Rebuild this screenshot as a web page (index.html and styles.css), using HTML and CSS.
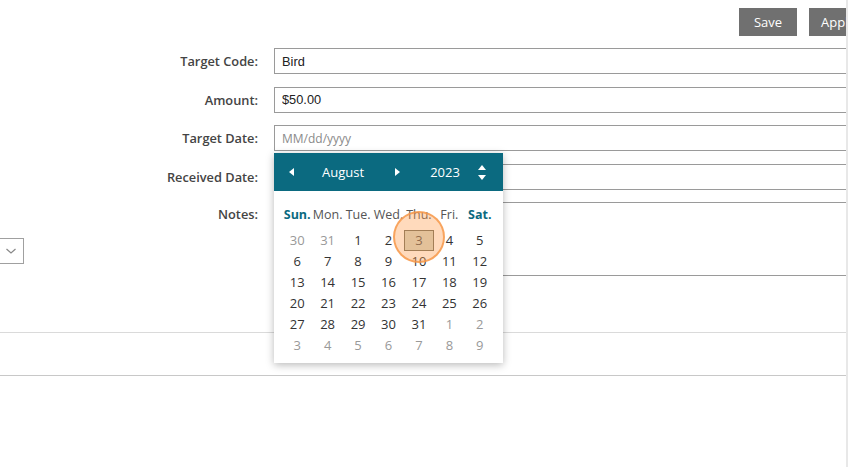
FILE: index.html
```html
<!DOCTYPE html>
<html lang="en">
<head>
<meta charset="utf-8">
<title>Target</title>
<link rel="stylesheet" href="styles.css">
</head>
<body>
<div class="page">
  <div class="toolbar">
    <button class="btn" type="button">Save</button>
    <button class="btn" type="button">Apply</button>
  </div>

  <form class="form">
    <label class="lbl">Target Code:</label>
    <div class="field"><input class="inp" type="text" value="Bird"></div>

    <label class="lbl">Amount:</label>
    <div class="field"><input class="inp" type="text" value="$50.00"></div>

    <label class="lbl">Target Date:</label>
    <div class="field date-field">
      <input class="inp" type="text" placeholder="MM/dd/yyyy">
      <div class="cal">
        <div class="cal-head">
          <span class="nav"><i class="tri-left"></i></span>
          <span class="month">August</span>
          <span class="nav"><i class="tri-right"></i></span>
          <span class="year">2023</span>
          <span class="spin"><i class="tri-up"></i><i class="tri-down"></i></span>
        </div>
        <div class="cal-body">
          <div class="dow">
            <span class="we">Sun.</span><span>Mon.</span><span>Tue.</span><span>Wed.</span><span>Thu.</span><span>Fri.</span><span class="we">Sat.</span>
          </div>
          <div class="days">
            <span class="off">30</span><span class="off">31</span><span>1</span><span>2</span><span class="sel">3</span><span>4</span><span>5</span>
            <span>6</span><span>7</span><span>8</span><span>9</span><span>10</span><span>11</span><span>12</span>
            <span>13</span><span>14</span><span>15</span><span>16</span><span>17</span><span>18</span><span>19</span>
            <span>20</span><span>21</span><span>22</span><span>23</span><span>24</span><span>25</span><span>26</span>
            <span>27</span><span>28</span><span>29</span><span>30</span><span>31</span><span class="off">1</span><span class="off">2</span>
            <span class="off">3</span><span class="off">4</span><span class="off">5</span><span class="off">6</span><span class="off">7</span><span class="off">8</span><span class="off">9</span>
          </div>
        </div>
      </div>
    </div>

    <label class="lbl">Received Date:</label>
    <div class="field"><input class="inp" type="text"></div>

    <div class="lbl-stack">
      <label class="lbl lbl-top">Notes:</label>
      <div class="select"><svg width="12" height="8" viewBox="0 0 12 8"><path d="M1.5 2 L6 6 L10.5 2" fill="none" stroke="#888" stroke-width="1.2"/></svg></div>
    </div>
    <div class="field"><textarea class="inp notes"></textarea></div>
  </form>

  <div class="band"></div>
</div>
</body>
</html>
```

FILE: styles.css
```css
html, body {
  margin: 0;
  padding: 0;
  background: #fff;
}

.page {
  position: relative;
  width: 846px;
  height: 467px;
  overflow: hidden;
  border-right: 2px solid #e8e8e8;
  font-family: "Open Sans", "Liberation Sans", sans-serif;
}

.toolbar {
  width: 867px;
  display: flex;
  justify-content: flex-end;
  gap: 12px;
  padding-top: 8px;
}

.btn {
  width: 58px;
  height: 28px;
  border: none;
  background: #707070;
  color: #fff;
  font-family: "Open Sans", sans-serif;
  font-size: 13px;
  padding: 0;
  flex: none;
}

.form {
  display: grid;
  grid-template-columns: 258px 620px;
  column-gap: 16px;
  row-gap: 12.5px;
  margin-top: 12px;
}

.lbl {
  align-self: center;
  text-align: right;
  font-size: 12.8px;
  font-weight: 600;
  color: #444;
}

.lbl-stack {
  display: flex;
  flex-direction: column;
  align-items: flex-end;
}

.lbl-top {
  align-self: flex-end;
  padding-top: 3px;
  line-height: 18px;
}

.select {
  align-self: flex-start;
  margin-left: -46px;
  margin-top: 15px;
  width: 70px;
  height: 26px;
  box-sizing: border-box;
  border: 1px solid #a0a0a0;
  display: flex;
  align-items: center;
  justify-content: flex-end;
  padding-right: 6px;
}

.field {
  position: relative;
}

.inp {
  display: block;
  box-sizing: border-box;
  width: 100%;
  height: 26px;
  margin: 0;
  border: 1px solid #9a9a9a;
  padding: 0 7px;
  font-family: "Liberation Sans", Arial, sans-serif;
  font-size: 12.8px;
  color: #222;
  background: #fff;
  outline: none;
}

.inp::placeholder {
  font-family: "Open Sans", sans-serif;
  color: #8a8a8a;
  font-size: 12px;
}

.notes {
  height: 74px;
  resize: none;
}

.band {
  margin-top: 56px;
  height: 42px;
  border-top: 1px solid #dadada;
  border-bottom: 1px solid #c8c8c8;
}

/* calendar popup */
.cal {
  position: absolute;
  left: 0;
  top: calc(100% + 2px);
  width: 229px;
  background: #fff;
  box-shadow: 0 2px 8px rgba(0, 0, 0, 0.28);
  z-index: 10;
}

.cal-head {
  height: 38px;
  background: #0b6a80;
  color: #fff;
  display: grid;
  grid-template-columns: 34px 70px 38px 58px 16px;
  align-items: center;
  font-size: 13px;
}

.cal-head > span {
  display: flex;
  justify-content: center;
  align-items: center;
}

.tri-left {
  width: 0;
  height: 0;
  border-top: 4px solid transparent;
  border-bottom: 4px solid transparent;
  border-right: 5px solid #fff;
}

.tri-right {
  width: 0;
  height: 0;
  border-top: 4px solid transparent;
  border-bottom: 4px solid transparent;
  border-left: 5px solid #fff;
}

.spin {
  flex-direction: column;
  gap: 5px;
}

.tri-up {
  width: 0;
  height: 0;
  border-left: 4px solid transparent;
  border-right: 4px solid transparent;
  border-bottom: 5px solid #fff;
}

.tri-down {
  width: 0;
  height: 0;
  border-left: 4px solid transparent;
  border-right: 4px solid transparent;
  border-top: 5px solid #fff;
}

.cal-body {
  padding: 13px 8px 7px;
}

.dow, .days {
  display: grid;
  grid-template-columns: repeat(7, 1fr);
}

.dow span {
  text-align: center;
  line-height: 21px;
  font-size: 12.5px;
  color: #555;
  white-space: nowrap;
}

.dow .we {
  color: #0b6a80;
  font-weight: 700;
}

.days {
  margin-top: 5px;
}

.days span {
  position: relative;
  text-align: center;
  line-height: 21px;
  height: 21px;
  font-size: 13px;
  color: #333;
}

.days .off {
  color: #999;
}

.days .sel {
  box-sizing: border-box;
  line-height: 19px;
  border: 1px solid #6f6f60;
  background: #d4d8c8;
  color: #555;
}

.days .sel::after {
  content: "";
  position: absolute;
  left: -12px;
  top: -20px;
  width: 52px;
  height: 52px;
  box-sizing: border-box;
  border-radius: 50%;
  border: 2px solid rgba(246, 150, 70, 0.8);
  background: rgba(255, 153, 68, 0.36);
  z-index: 5;
}
```
